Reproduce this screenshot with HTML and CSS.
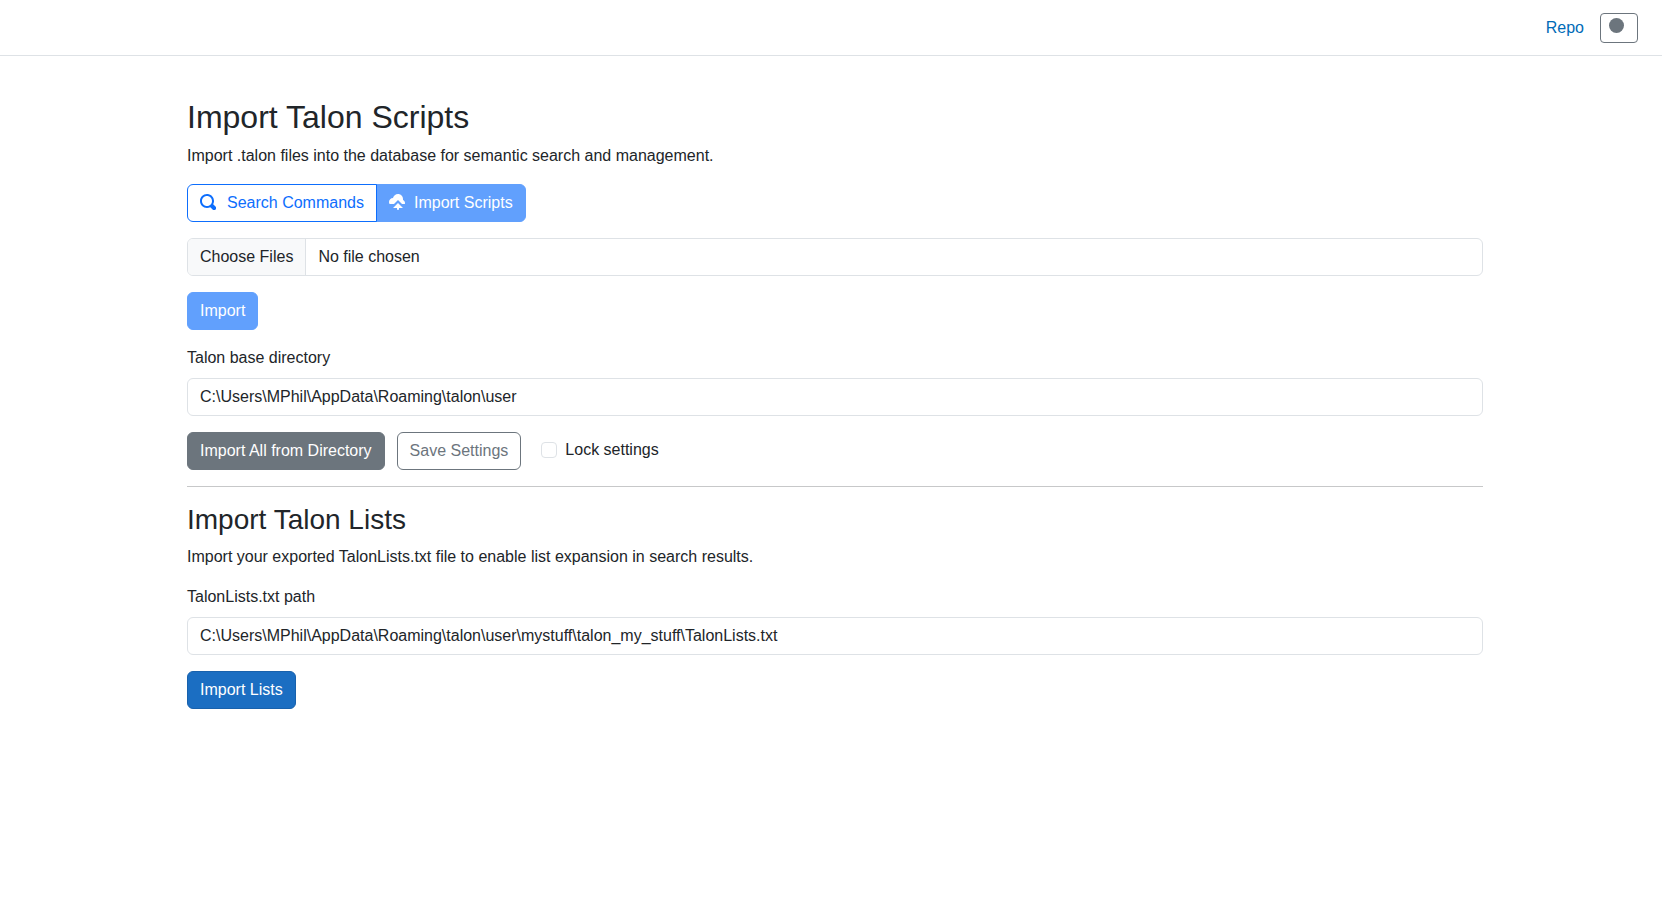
FILE: index.html
```html
<!DOCTYPE html>
<html lang="en">
<head>
<meta charset="utf-8">
<title>Import Talon Scripts</title>
<link rel="stylesheet" href="styles.css">
</head>
<body>
<header class="top-row">
  <a class="repo-link" href="#">Repo</a>
  <button class="btn btn-outline-secondary btn-theme" type="button" aria-label="Toggle theme">
    <svg class="theme-icon" viewBox="0 0 16 16" aria-hidden="true"><circle cx="8" cy="8" r="8"/></svg>
  </button>
</header>
<main class="page">
  <div class="container">
    <h1 class="title">Import Talon Scripts</h1>
    <p class="text">Import .talon files into the database for semantic search and management.</p>
    <div class="btn-group">
      <button class="btn btn-outline-primary" type="button">
        <svg class="icon icon-search" viewBox="0 0 8 8" aria-hidden="true"><path d="M3.5 0c-1.93 0-3.5 1.57-3.5 3.5s1.57 3.5 3.5 3.5c.59 0 1.17-.14 1.66-.41a1 1 0 0 0 .13.13l1 1a1.02 1.02 0 1 0 1.44-1.44l-1-1a1 1 0 0 0-.16-.13c.27-.49.44-1.06.44-1.66 0-1.93-1.55-3.5-3.5-3.5zm0 1c1.39 0 2.5 1.11 2.5 2.5 0 .66-.24 1.27-.66 1.72-.01.01-.02.02-.03.03a1 1 0 0 0-.13.13c-.44.4-1.04.63-1.69.63-1.39 0-2.5-1.11-2.5-2.5s1.11-2.5 2.5-2.5z"/></svg>
        Search Commands
      </button>
      <button class="btn btn-primary" type="button" disabled>
        <svg class="icon" viewBox="0 0 8 8" aria-hidden="true"><path d="M4.5 0c-1.21 0-2.27.86-2.5 2-1.1 0-2 .9-2 2 0 .37.11.71.28 1h2.22l2-2 2 2h1.41c.06-.16.09-.32.09-.5 0-.65-.42-1.29-1-1.5v-.5c0-1.38-1.12-2.5-2.5-2.5zm0 4.5l-2.5 2.5h2v.5a.5.5 0 1 0 1 0v-.5h2l-2.5-2.5z"/></svg>
        Import Scripts
      </button>
    </div>
    <input class="form-control" type="file" multiple aria-label="Talon files">
    <button class="btn btn-primary" type="button" disabled>Import</button>
    <div class="field">
      <label for="base-dir">Talon base directory</label>
      <input class="form-control" id="base-dir" type="text" value="C:\Users\MPhil\AppData\Roaming\talon\user">
    </div>
    <div class="actions">
      <button class="btn btn-secondary" type="button">Import All from Directory</button>
      <button class="btn btn-outline-secondary" type="button">Save Settings</button>
      <div class="form-check">
        <input class="check-input" id="lock" type="checkbox">
        <label for="lock">Lock settings</label>
      </div>
    </div>
    <hr class="divider">
    <h2 class="subtitle">Import Talon Lists</h2>
    <p class="text">Import your exported TalonLists.txt file to enable list expansion in search results.</p>
    <div class="field">
      <label for="lists-path">TalonLists.txt path</label>
      <input class="form-control" id="lists-path" type="text" value="C:\Users\MPhil\AppData\Roaming\talon\user\mystuff\talon_my_stuff\TalonLists.txt">
    </div>
    <button class="btn btn-lists" type="button">Import Lists</button>
  </div>
</main>
</body>
</html>
```
FILE: styles.css
```css
*, *::before, *::after { box-sizing: border-box; }

body {
  margin: 0;
  background: #fff;
  color: #212529;
  font-family: "Liberation Sans", Arial, sans-serif;
  font-size: 16px;
  line-height: 24px;
}

h1, h2, p { margin: 0; }

.top-row {
  display: flex;
  align-items: center;
  justify-content: flex-end;
  gap: 16px;
  height: 56px;
  padding: 0 24px;
  border-bottom: 1px solid #dee2e6;
}

.repo-link { color: #006bb7; text-decoration: none; }

.page { padding: 42px 0 24px 8px; }

.container {
  display: flex;
  flex-direction: column;
  align-items: flex-start;
  gap: 16px;
  max-width: 1320px;
  margin: 0 auto;
  padding: 0 12px;
}

.title, .subtitle { margin-bottom: -8px; font-weight: 500; font-weight: 400; }
.title { font-size: 32px; line-height: 38px; }
.subtitle { font-size: 28px; line-height: 34px; }

.btn {
  display: inline-flex;
  align-items: center;
  padding: 6px 12px;
  border: 1px solid transparent;
  border-radius: 6px;
  background: transparent;
  font: inherit;
  cursor: pointer;
}
.btn:disabled { opacity: 0.65; cursor: default; }

.btn-primary { background: #0d6efd; border-color: #0d6efd; color: #fff; }
.btn-outline-primary { border-color: #0d6efd; color: #0d6efd; }
.btn-secondary { background: #6c757d; border-color: #6c757d; color: #fff; }
.btn-outline-secondary { border-color: #6c757d; color: #6c757d; }
.btn-lists { background: #1b6ec2; border-color: #1861ac; color: #fff; }

.btn-theme { width: 38px; height: 30px; padding: 4px 8px; border-radius: 4px; }
.theme-icon { width: 15px; height: 15px; margin-bottom: 4px; fill: currentColor; }

.btn-group { display: flex; }
.btn-group .btn:first-child { border-top-right-radius: 0; border-bottom-right-radius: 0; }
.btn-group .btn:last-child { margin-left: -1px; border-top-left-radius: 0; border-bottom-left-radius: 0; }

.icon { width: 16px; height: 16px; margin: 0 9px 3px 0; fill: currentColor; }
.icon-search { margin-right: 11px; }

.form-control {
  display: block;
  width: 100%;
  height: 38px;
  padding: 6px 12px;
  border: 1px solid #dee2e6;
  border-radius: 6px;
  background: #fff;
  color: inherit;
  font: inherit;
}
.form-control[type="file"] { overflow: hidden; }
.form-control::file-selector-button {
  margin: -6px 12px -6px -12px;
  padding: 6px 12px;
  border: 0 solid #dee2e6;
  border-right-width: 1px;
  border-radius: 0;
  background: #f8f9fa;
  color: inherit;
  font: inherit;
}

.field { display: flex; flex-direction: column; gap: 8px; width: 100%; }

.actions { display: flex; align-items: center; gap: 12px; }
.form-check { display: flex; align-items: center; gap: 8px; margin: 0 0 2px 8px; }
.check-input {
  appearance: none;
  width: 16px;
  height: 16px;
  margin: 0;
  border: 1px solid #dee2e6;
  border-radius: 4px;
  background: #fff;
}
.check-input:checked { background: #0d6efd; border-color: #0d6efd; }

.divider { width: 100%; margin: 0; border: 0; border-top: 1px solid #c7c8c9; }
```
